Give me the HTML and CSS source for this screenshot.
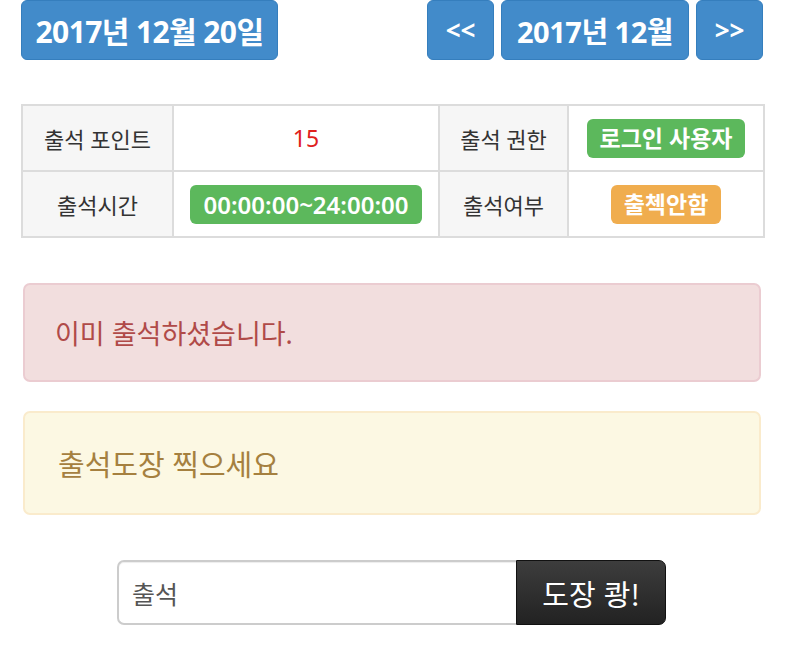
FILE: index.html
```html
<!DOCTYPE html>
<html lang="ko">
<head>
<meta charset="utf-8">
<link rel="stylesheet" href="styles.css">
</head>
<body>
<div class="page">
  <div class="topbar">
    <span class="btn btn-primary btn-date">2017년 12월 20일</span>
    <div class="nav">
      <span class="btn btn-primary btn-arrow">&lt;&lt;</span>
      <span class="btn btn-primary btn-month">2017년 12월</span>
      <span class="btn btn-primary btn-arrow">&gt;&gt;</span>
    </div>
  </div>

  <table class="info">
    <colgroup>
      <col class="c1"><col class="c2"><col class="c3"><col class="c4">
    </colgroup>
    <tr>
      <th>출석 포인트</th>
      <td><span class="point">15</span></td>
      <th>출석 권한</th>
      <td><span class="label label-success">로그인 사용자</span></td>
    </tr>
    <tr>
      <th>출석시간</th>
      <td><span class="label label-success label-time">00:00:00~24:00:00</span></td>
      <th>출석여부</th>
      <td><span class="label label-warning">출첵안함</span></td>
    </tr>
  </table>

  <div class="alert alert-danger">이미 출석하셨습니다.</div>
  <div class="alert alert-warning">출석도장 찍으세요</div>

  <div class="stamp">
    <div class="input-group">
      <input class="field" type="text" value="출석">
      <button class="btn-stamp" type="button">도장 쾅!</button>
    </div>
  </div>
</div>
</body>
</html>
```

FILE: styles.css
```css
* { box-sizing: border-box; }
html, body { margin: 0; padding: 0; background: #fff; }
body {
  font-family: "Noto Sans", "Noto Sans CJK KR", sans-serif;
  color: #333;
}
.page {
  padding: 0 23px 0 21px;
}
.topbar {
  display: flex;
  justify-content: space-between;
  align-items: flex-start;
}
.nav {
  display: flex;
  gap: 7px;
}
.btn {
  display: inline-flex;
  align-items: center;
  justify-content: center;
  height: 60px;
  border-radius: 6px;
  font-weight: 700;
  color: #fff;
  white-space: nowrap;
}
.btn-primary {
  background: #428bca;
  border: 1px solid #357ebd;
}
.btn-date { width: 257px; font-size: 30px; letter-spacing: -0.6px; }
.btn-month { width: 188px; font-size: 29px; letter-spacing: -0.5px; }
.btn-arrow { width: 67px; font-size: 26px; }

.info {
  margin-top: 44px;
  width: 742px;
  border-collapse: collapse;
  table-layout: fixed;
  border: 2px solid #dcdcdc;
}
.c1 { width: 151px; }
.c2 { width: 266px; }
.c3 { width: 129px; }
.c4 { width: 196px; }
.info th, .info td {
  height: 66px;
  border: 2px solid #dcdcdc;
  text-align: center;
  vertical-align: middle;
  font-size: 22px;
  font-weight: 400;
  padding: 0;
}
.info th { background: #f6f6f6; color: #333; }
.info td { background: #fff; }
.point { color: #e0201c; font-size: 23px; }
.label {
  display: inline-block;
  padding: 0 13px;
  height: 39px;
  line-height: 39px;
  border-radius: 6px;
  color: #fff;
  font-weight: 700;
  font-size: 23px;
}
.label-time { font-size: 24px; padding: 0 14px; font-weight: 600; }
.label-success { background: #5cb85c; }
.label-warning { background: #f0ad4e; }

.alert {
  margin: 0 2px;
  border-radius: 7px;
  padding: 0 30px;
  display: flex;
  align-items: center;
}
.alert-danger {
  margin-top: 45px;
  height: 99px;
  background: #f2dede;
  border: 2px solid #ebccd1;
  color: #b04a48;
  font-size: 27px;
}
.alert-warning {
  margin-top: 29px;
  height: 104px;
  background: #fcf8e3;
  border: 2px solid #faebcc;
  color: #a5803f;
  font-size: 29px;
  padding-left: 33px;
}

.stamp {
  margin-top: 45px;
  display: flex;
  padding-left: 96px;
}
.input-group {
  display: flex;
  width: 549px;
  height: 65px;
}
.field {
  flex: 1;
  min-width: 0;
  height: 65px;
  border: 2px solid #ccc;
  border-right: none;
  border-radius: 7px 0 0 7px;
  padding: 0 13px;
  font-family: "Noto Sans CJK KR", sans-serif;
  font-size: 25px;
  color: #555;
  background: #fff;
  outline: none;
  box-shadow: inset 0 1px 1px rgba(0,0,0,.075);
}
.btn-stamp {
  width: 150px;
  height: 65px;
  border: 1px solid #111;
  border-radius: 0 7px 7px 0;
  background: linear-gradient(#3d3d3d, #222);
  color: #fff;
  font-family: "Noto Sans CJK KR", sans-serif;
  font-size: 29px;
  padding: 0;
}
```
